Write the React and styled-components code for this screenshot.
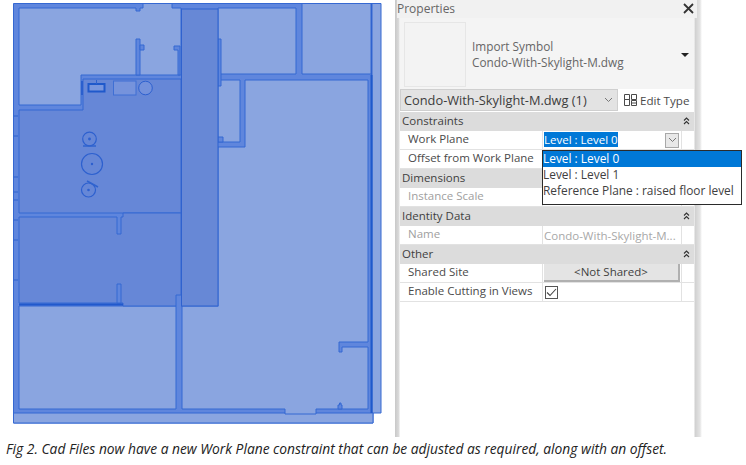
import React from 'react'
import styled, { createGlobalStyle } from 'styled-components'

const GlobalStyle = createGlobalStyle`
  html, body {
    margin: 0;
    background: #fff;
  }
`

const Page = styled.div`
  width: 746px;
  height: 465px;
  overflow: hidden;
  font-family: "Open Sans", "Liberation Sans", sans-serif;
`

const TopRow = styled.div`
  display: flex;
  height: 437px;
`

const PlanSvg = styled.svg`
  flex: none;
  display: block;
  width: 395px;
  height: 437px;
`

const Room = styled.path`
  fill: ${p => (p.$dark ? '#6687d7' : '#8aa5e0')};
  stroke: #3568d2;
  stroke-width: 1;
`

const Wall = styled.path`
  fill: #5f86dd;
  stroke: #3568d2;
  stroke-width: 1;
`

const Band = styled.rect`
  fill: #6788d6;
  stroke: #2f62cf;
  stroke-width: 1;
`

const Line = styled.path`
  fill: none;
  stroke: ${p => p.$color || '#2f63cf'};
  stroke-width: ${p => p.$w || 1};
`

const Fixture = styled.circle`
  fill: ${p => p.$fill || 'none'};
  stroke: #2d60cf;
  stroke-width: ${p => p.$w || 1.2};
`

const Shell = styled.aside`
  box-sizing: border-box;
  flex: none;
  width: 307px;
  height: 437px;
  padding: 0 8px 0 5px;
  color: #4a4a4a;
  font-size: 11.5px;
  background: linear-gradient(
    to right,
    #c8c8c8 0,
    #dcdcdc 4px,
    #fff 5px,
    #fff 299px,
    #d0d0d0 300px,
    #e4e4e4 305px,
    #fff 307px
  );
`

const TitleBar = styled.div`
  box-sizing: border-box;
  display: flex;
  align-items: center;
  justify-content: space-between;
  height: 18px;
  margin-left: -3px;
  margin-right: -3px;
  padding: 0 3px 1px 0;
  background: #f1f1f1;
  color: #666;
  font-size: 12px;
`

const TypeBox = styled.div`
  box-sizing: border-box;
  display: flex;
  align-items: center;
  height: 71px;
  padding: 3px 5px 1px 4px;
  background: #f4f4f4;
`

const Thumb = styled.div`
  flex: none;
  width: 62px;
  height: 65px;
  margin-right: 6px;
  background: #f3f3f3;
  border: 1px solid #e6e6e6;
  box-sizing: border-box;
`

const TypeName = styled.div`
  flex: 1;
  line-height: 16px;
  color: #666;
  font-size: 11.8px;
  margin-bottom: 2px;
`

const Caret = styled.span`
  width: 0;
  height: 0;
  border-left: 4px solid transparent;
  border-right: 4px solid transparent;
  border-top: 4px solid #222;
`

const SelectorRow = styled.div`
  display: flex;
  align-items: center;
  height: 22px;
`

const Selector = styled.div`
  box-sizing: border-box;
  display: flex;
  align-items: center;
  justify-content: space-between;
  width: 218px;
  height: 22px;
  padding: 0 4px 1px 3px;
  background: #e3e3e3;
  border: 1px solid #cfcfcf;
  color: #3c3c3c;
  font-size: 12.8px;
`

const EditType = styled.div`
  display: flex;
  align-items: center;
  gap: 2px;
  margin-left: 5px;
  color: #4a4a4a;
  font-size: 11.6px;
`

const Sheet = styled.div`
  margin-top: 1px;
  width: 294px;
`

const SectionHead = styled.div`
  display: flex;
  align-items: center;
  justify-content: space-between;
  box-sizing: border-box;
  height: 19px;
  padding: 0 4px 2px 2px;
  background: #dcdcdc;
  color: #3f3f3f;
`

const Row = styled.div`
  display: grid;
  grid-template-columns: 142px 140px 12px;
  height: 19px;
  border-bottom: 1px solid #e2e2e2;
  box-sizing: border-box;
  background: #fff;
`

const Label = styled.div`
  padding-left: 8px;
  line-height: 16px;
  color: ${p => (p.$muted ? '#a0a0a0' : '#4a4a4a')};
  white-space: nowrap;
`

const Value = styled.div`
  position: relative;
  box-sizing: border-box;
  display: flex;
  align-items: center;
  justify-content: space-between;
  padding: 0 1px;
  border-left: 1px solid #e2e2e2;
  border-right: 1px solid #e2e2e2;
  color: ${p => (p.$muted ? '#a8a8a8' : '#4a4a4a')};
  white-space: nowrap;
  overflow: ${p => (p.$open ? 'visible' : 'hidden')};
`

const Selected = styled.span`
  background: #0078d7;
  color: #fff;
  line-height: 15px;
  margin-bottom: 2px;
`

const ComboButton = styled.span`
  display: flex;
  align-items: center;
  justify-content: center;
  width: 14px;
  height: 15px;
  margin-right: 1px;
  background: #e8e8e8;
  border: 1px solid #a8a8a8;
  box-sizing: border-box;
`

const Menu = styled.ul`
  position: absolute;
  top: 19px;
  left: -1px;
  z-index: 2;
  box-sizing: border-box;
  width: 200px;
  height: 55px;
  margin: 0;
  padding: 0;
  list-style: none;
  background: #fff;
  border: 1px solid #2b2b2b;
  font-size: 11.9px;
`

const MenuItem = styled.li`
  height: 16px;
  line-height: 15px;
  color: ${p => (p.$active ? '#fff' : '#3f3f3f')};
  background: ${p => (p.$active ? '#0078d7' : 'transparent')};
`

const NotShared = styled.div`
  width: 100%;
  height: 18px;
  line-height: 16px;
  text-align: center;
  background: #e4e4e4;
  border-right: 2px solid #b0b0b0;
  border-bottom: 2px solid #b0b0b0;
  box-sizing: border-box;
  color: #3f3f3f;
`

const Check = styled.span`
  display: flex;
  align-items: center;
  justify-content: center;
  box-sizing: border-box;
  width: 13px;
  height: 13px;
  margin-left: 1px;
  border: 1px solid #555;
  background: #fff;
`

const Caption = styled.p`
  margin: 0;
  padding-left: 6px;
  line-height: 24px;
  font-size: 13.8px;
  font-style: italic;
  color: #222;
  white-space: nowrap;
`

function Chevron({ color = '#777' }) {
  return (
    <svg width="9" height="6" viewBox="0 0 9 6">
      <path d="M1 1l3.5 3.5L8 1" fill="none" stroke={color} strokeWidth="1" />
    </svg>
  )
}

function Collapse() {
  return (
    <svg width="7" height="8" viewBox="0 0 7 8">
      <path d="M1 3.5L3.5 1 6 3.5M1 7L3.5 4.5 6 7" fill="none" stroke="#333" strokeWidth="1.1" />
    </svg>
  )
}

function Section({ title }) {
  return (
    <SectionHead>
      {title}
      <Collapse />
    </SectionHead>
  )
}

function Plan() {
  return (
    <PlanSvg viewBox="0 0 395 437">
      {/* footprint and walls */}
      <Wall d="M13.5 3.5H372V413H373V423H13.5Z" />
      <Room d="M372 3.5H381V413H372Z" />
      <Room d="M13.5 413H373V423H13.5Z" />

      {/* rooms */}
      <Room d="M19 8H136V11H140V8H143V3.5H172V8H181V75H81V105H19Z" />
      <Room d="M218 8H296V74H218Z" />
      <Room d="M302 3.5H371V74H302Z" />
      <Room d="M218 80H240V142H218Z" />
      <Room d="M245 80H368V342H339V352H342V347H368V409H316V414H285V409H182V306H218V147H245Z" />
      <Room d="M19 306H176V409H19Z" />

      {/* darker core, left side */}
      <Room $dark d="M19 110H83V79H181V213H19Z" />
      <Room $dark d="M19 217H117V234H121V217H123V213H181V295H176V306H123V303H19Z" />

      {/* stub walls */}
      <Wall d="M136 39H140V75H136Z" />
      <Wall d="M140 45H144V50H140Z" />
      <Wall d="M174 46H180V75H178V50H174Z" />
      <Wall d="M117 284H121V303H117Z" />
      <Wall d="M338 409V405H339.5V403H341V405H342V409Z" />
      <Wall d="M218 39H221V86H218Z" />
      <Wall d="M218 137H223V142H218Z" />

      <Band x="181.5" y="9" width="36.5" height="297" />

      {/* heavy lines */}
      <Line $color="#2f63cf" d="M371.5 3.5V75" />
      <Line $w="2" $color="#1f59cb" d="M371.5 75V413" />
      <Line $w="2" $color="#2159cc" d="M19 304.5H123" />
      <Line $w="2" $color="#2a5fce" d="M82 81V95" />
      <Line d="M13.5 116H18M13.5 136H18M13.5 177H18M13.5 192H18M13.5 200H18M13.5 220H18M13.5 240H18M13.5 280H18" />

      {/* fixtures */}
      <rect x="88.5" y="84" width="16" height="7.5" fill="#7896de" stroke="#1f59cb" strokeWidth="2" />
      <Line d="M96.5 80V84" />
      <rect x="113.5" y="81" width="22.5" height="14" fill="#7693dc" stroke="#3f6fd4" />
      <Fixture cx="145.5" cy="88" r="6.8" $fill="#7391dc" $w={1} />
      <Fixture cx="89.5" cy="139" r="6.8" />
      <Line $w="1.5" d="M83 146H96" />
      <Fixture cx="89.5" cy="139" r="0.8" $fill="#2d60cf" />
      <Fixture cx="92" cy="164" r="10.5" />
      <Fixture cx="92" cy="164" r="0.6" $fill="#2d60cf" />
      <Fixture cx="88.5" cy="190" r="7" />
      <Fixture cx="88.5" cy="190" r="0.7" $fill="#2d60cf" />
      <Line $w="1.5" d="M87 181L98 187" />
    </PlanSvg>
  )
}

export default function App() {
  return (
    <Page>
      <GlobalStyle />
      <TopRow>
        <Plan />
        <Shell>
          <TitleBar>
            Properties
            <svg width="11" height="11" viewBox="0 0 11 11">
              <path d="M1 1l9 9M10 1l-9 9" stroke="#333" strokeWidth="1.8" fill="none" />
            </svg>
          </TitleBar>
          <TypeBox>
            <Thumb />
            <TypeName>
              Import Symbol
              <br />
              Condo-With-Skylight-M.dwg
            </TypeName>
            <Caret />
          </TypeBox>
          <SelectorRow>
            <Selector>
              Condo-With-Skylight-M.dwg (1)
              <Chevron />
            </Selector>
            <EditType>
              <svg width="15" height="14" viewBox="0 0 15 14">
                <path
                  d="M1.5 1.5h5v5h-5zM8.5 1.5h5v5h-5zM1.5 6.5h5v6h-5zM8.5 7.5h5v5h-5zM8.5 10h5"
                  fill="none"
                  stroke="#4a4a4a"
                />
              </svg>
              Edit Type
            </EditType>
          </SelectorRow>
          <Sheet>
            <Section title="Constraints" />
            <Row>
              <Label>Work Plane</Label>
              <Value $open>
                <Selected>Level : Level 0</Selected>
                <ComboButton>
                  <Chevron />
                </ComboButton>
                <Menu>
                  <MenuItem $active>Level : Level 0</MenuItem>
                  <MenuItem>Level : Level 1</MenuItem>
                  <MenuItem>Reference Plane : raised floor level</MenuItem>
                </Menu>
              </Value>
              <span />
            </Row>
            <Row>
              <Label>Offset from Work Plane</Label>
              <Value />
              <span />
            </Row>
            <Section title="Dimensions" />
            <Row>
              <Label $muted>Instance Scale</Label>
              <Value $muted />
              <span />
            </Row>
            <Section title="Identity Data" />
            <Row>
              <Label $muted>Name</Label>
              <Value $muted>Condo-With-Skylight-M...</Value>
              <span />
            </Row>
            <Section title="Other" />
            <Row>
              <Label>Shared Site</Label>
              <Value>
                <NotShared>&lt;Not Shared&gt;</NotShared>
              </Value>
              <span />
            </Row>
            <Row>
              <Label>Enable Cutting in Views</Label>
              <Value>
                <Check>
                  <svg width="11" height="9" viewBox="0 0 11 9">
                    <path d="M1 4.5L4 7.5 10 1" fill="none" stroke="#444" strokeWidth="1.1" />
                  </svg>
                </Check>
              </Value>
              <span />
            </Row>
          </Sheet>
        </Shell>
      </TopRow>
      <Caption>
        Fig 2. Cad Files now have a new Work Plane constraint that can be adjusted as required, along with an offset.
      </Caption>
    </Page>
  )
}
